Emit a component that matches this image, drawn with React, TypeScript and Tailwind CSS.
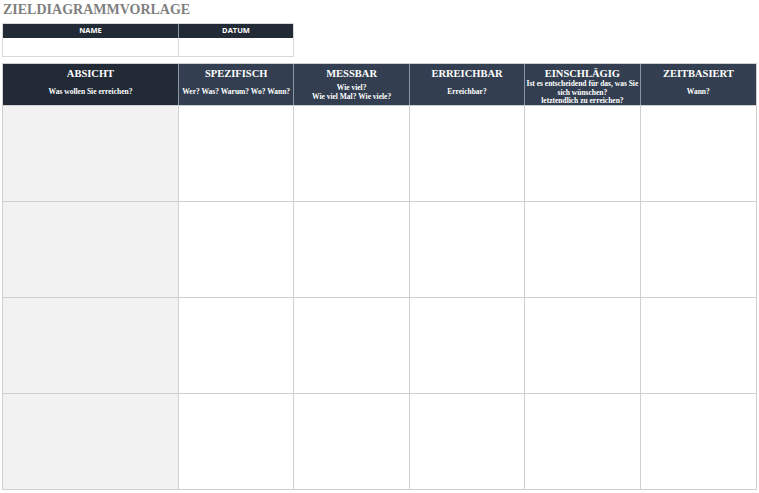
const serif = { fontFamily: '"Liberation Serif", "DejaVu Serif", serif' };

const columns = [
  { title: "ABSICHT", sub: ["Was wollen Sie erreichen?"], dark: true },
  { title: "SPEZIFISCH", sub: ["Wer? Was? Warum? Wo? Wann?"] },
  { title: "MESSBAR", sub: ["Wie viel?", "Wie viel Mal? Wie viele?"] },
  { title: "ERREICHBAR", sub: ["Erreichbar?"] },
  {
    title: "EINSCHLÄGIG",
    sub: ["Ist es entscheidend für das, was Sie", "sich wünschen?", "letztendlich zu erreichen?"],
  },
  { title: "ZEITBASIERT", sub: ["Wann?"] },
];

function HeaderCell({ title, sub, dark }: { title: string; sub: string[]; dark?: boolean }) {
  return (
    <div
      className={
        "flex flex-col h-[41px] border-r border-[#8a96a6] last:border-r-0 text-white text-center " +
        (dark ? "bg-[#222a35]" : "bg-[#333f50]")
      }
    >
      <div className="pt-[3px] text-[10.5px] leading-[13px] font-bold">{title}</div>
      <div className="flex-1 flex flex-col items-center justify-center text-[7.5px] leading-[8.5px] font-bold">
        {sub.map((s) => (
          <div key={s}>{s}</div>
        ))}
      </div>
    </div>
  );
}

export default function App() {
  const rows = [0, 1, 2, 3];
  return (
    <div className="w-[759px] h-[493px] bg-white overflow-hidden relative" style={serif}>
      <h1 className="pl-[3px] pt-[1px] text-[14px] leading-[17px] font-bold text-[#7f7f7f]">
        ZIELDIAGRAMMVORLAGE
      </h1>

      <div
        className="ml-[2px] mt-[5px] w-[292px] border border-[#d9d9d9]"
        style={{ fontFamily: '"Open Sans", "Liberation Sans", sans-serif' }}
      >
        <div className="grid grid-cols-[176px_1fr] bg-[#222a35] text-white text-[7.5px] font-bold h-[14px] items-center text-center">
          <div className="border-r border-[#8a96a6] h-full flex items-center justify-center">NAME</div>
          <div>DATUM</div>
        </div>
        <div className="grid grid-cols-[176px_1fr] h-[18px]">
          <div className="border-r border-[#d9d9d9]"></div>
          <div></div>
        </div>
      </div>

      <div className="ml-[2px] mt-[6px] w-[755px] border border-[#d0d0d0]">
        <div className="grid grid-cols-[176px_repeat(5,1fr)]">
          {columns.map((c) => (
            <HeaderCell key={c.title} {...c} />
          ))}
        </div>
        {rows.map((r) => (
          <div
            key={r}
            className="grid grid-cols-[176px_repeat(5,1fr)] h-[96px] border-t border-[#d0d0d0]"
          >
            <div className="bg-[#f2f2f2] border-r border-[#d0d0d0]"></div>
            {[1, 2, 3, 4, 5].map((i) => (
              <div key={i} className="border-r border-[#d0d0d0] last:border-r-0"></div>
            ))}
          </div>
        ))}
      </div>
    </div>
  );
}
